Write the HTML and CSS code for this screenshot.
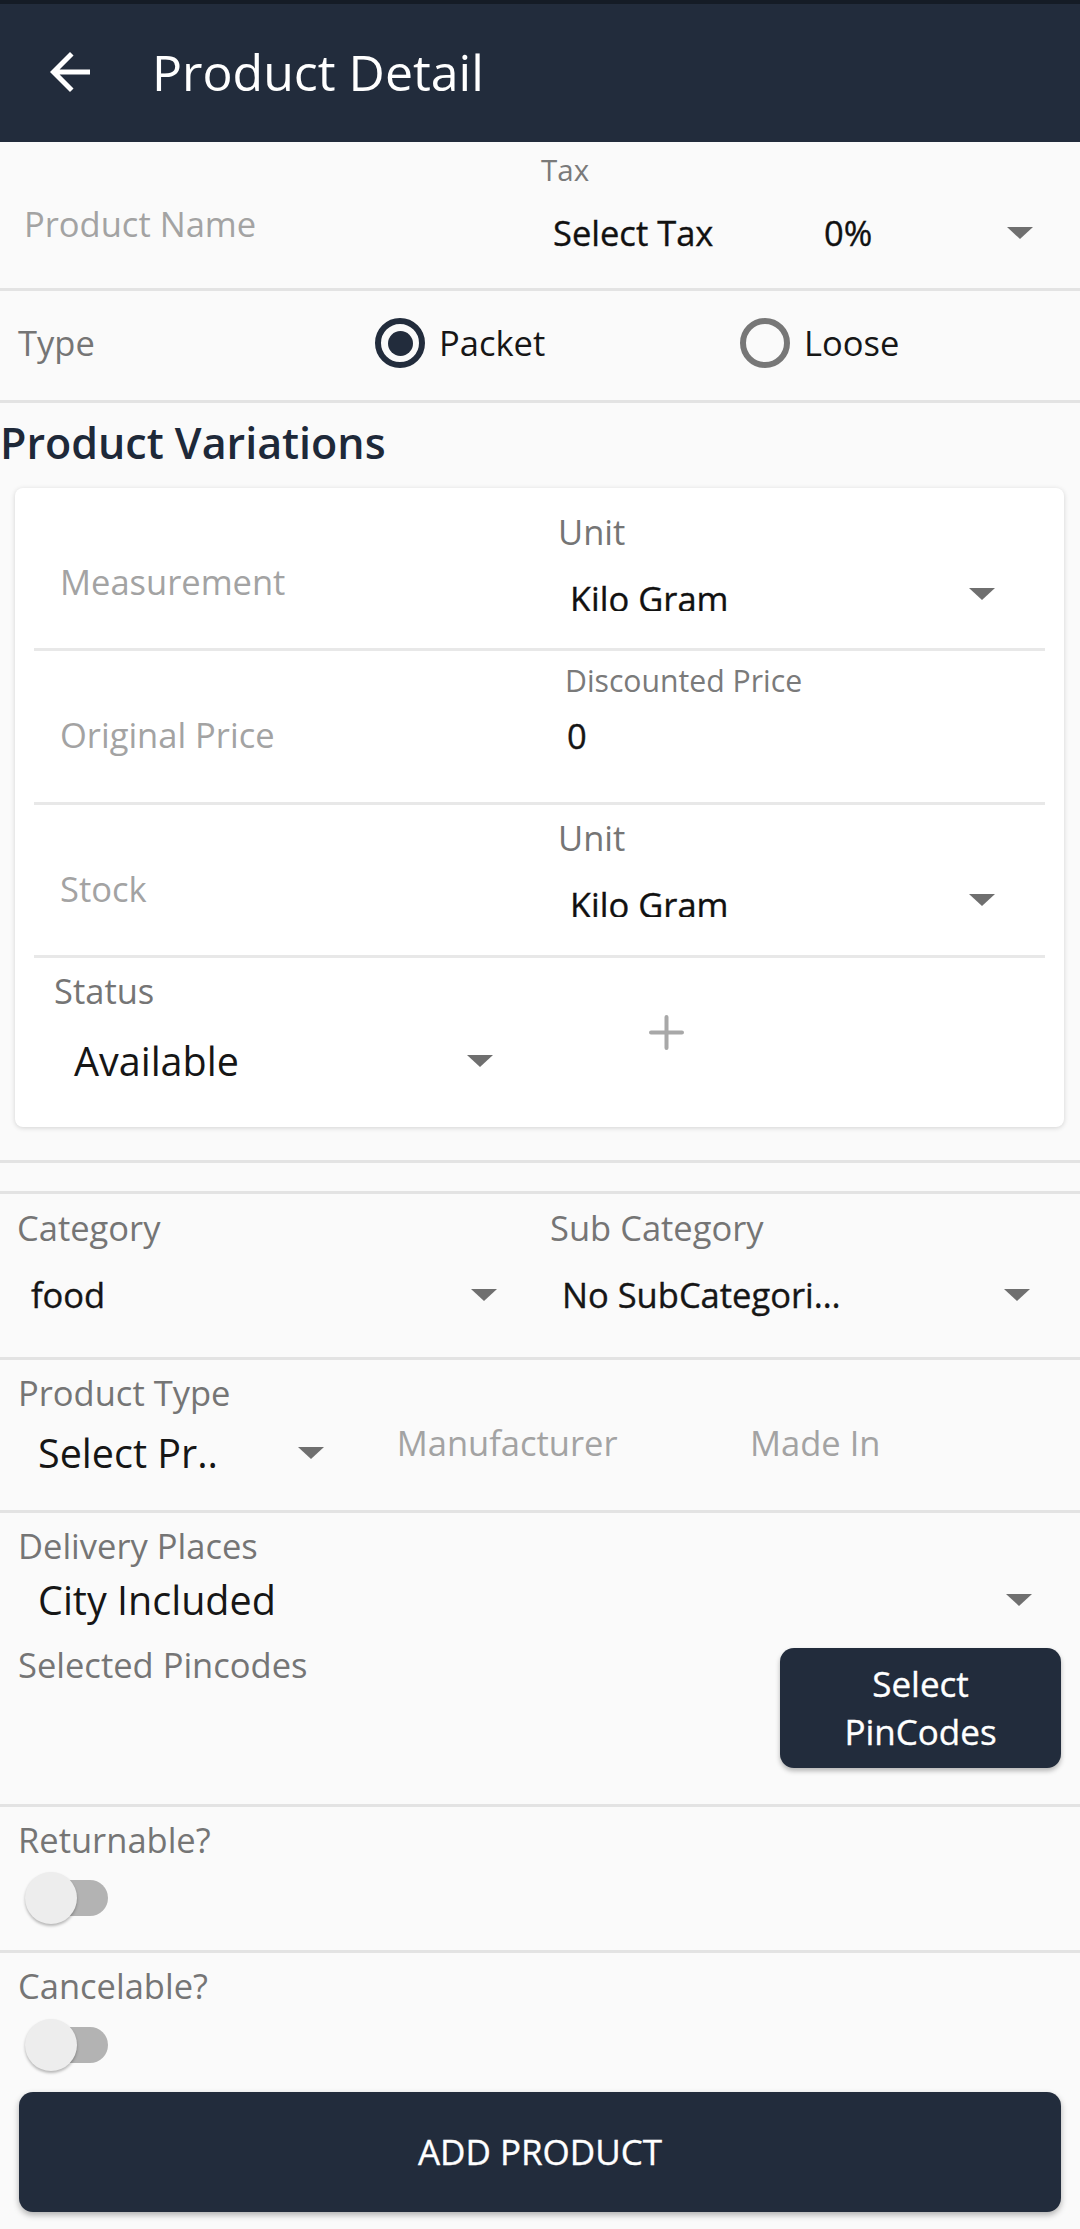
FILE: index.html
```html
<!DOCTYPE html>
<html>
<head>
<meta charset="utf-8">
<link rel="stylesheet" href="styles.css">
</head>
<body>
<header class="appbar">
  <svg class="back" viewBox="0 0 24 24"><path fill="#fff" d="M20 11H7.83l5.59-5.59L12 4l-8 8 8 8 1.41-1.41L7.83 13H20v-2z"/></svg>
  <div class="title">Product Detail</div>
</header>

<section class="sec-name">
  <div class="pname ph">Product Name</div>
  <div class="taxcol">
    <div class="small-label">Tax</div>
    <div class="taxrow">
      <span class="taxname strong">Select Tax</span>
      <span class="taxval strong">0%</span>
      <svg class="caret" viewBox="0 0 26 12"><polygon points="0,0 26,0 13,12"/></svg>
    </div>
  </div>
</section>

<section class="sec-type">
  <div class="typelabel">Type</div>
  <div class="radio">
    <span class="rcircle on"><span class="rdot"></span></span>
    <span class="rtext">Packet</span>
  </div>
  <div class="radio">
    <span class="rcircle off"></span>
    <span class="rtext">Loose</span>
  </div>
</section>

<h2 class="pv-title">Product Variations</h2>

<div class="card">
  <div class="vrow r1">
    <div class="vleft ph">Measurement</div>
    <div class="vright">
      <div class="label">Unit</div>
      <div class="kgrow">
        <span class="kg strong">Kilo Gram</span>
        <svg class="caret" viewBox="0 0 26 12"><polygon points="0,0 26,0 13,12"/></svg>
      </div>
    </div>
  </div>
  <div class="vrow r2">
    <div class="vleft ph">Original Price</div>
    <div class="vright price">
      <div class="small-label dp">Discounted Price</div>
      <div class="value strong zero">0</div>
    </div>
  </div>
  <div class="vrow r3">
    <div class="vleft ph">Stock</div>
    <div class="vright">
      <div class="label">Unit</div>
      <div class="kgrow">
        <span class="kg strong">Kilo Gram</span>
        <svg class="caret" viewBox="0 0 26 12"><polygon points="0,0 26,0 13,12"/></svg>
      </div>
    </div>
  </div>
  <div class="vrow last">
    <div class="statuscol">
      <div class="label">Status</div>
      <div class="bigspin status-spin">
        <span class="bigval">Available</span>
        <svg class="caret" viewBox="0 0 26 12"><polygon points="0,0 26,0 13,12"/></svg>
      </div>
    </div>
    <div class="pluscol">
      <svg class="plus" viewBox="0 0 35 35"><path d="M17.5 2v31M2 17.5h31" stroke="#a8a8a8" stroke-width="4" stroke-linecap="round" fill="none"/></svg>
    </div>
  </div>
</div>

<div class="emptylist"></div>

<section class="sec-cat">
  <div class="catcol left">
    <div class="label">Category</div>
    <div class="spin">
      <span class="value strong">food</span>
      <svg class="caret" viewBox="0 0 26 12"><polygon points="0,0 26,0 13,12"/></svg>
    </div>
  </div>
  <div class="catcol right">
    <div class="label">Sub Category</div>
    <div class="spin">
      <span class="value strong">No SubCategori…</span>
      <svg class="caret" viewBox="0 0 26 12"><polygon points="0,0 26,0 13,12"/></svg>
    </div>
  </div>
</section>

<section class="sec-ptype">
  <div class="ptcol">
    <div class="label">Product Type</div>
    <div class="bigspin pt-spin">
      <span class="bigval">Select Pr..</span>
      <svg class="caret" viewBox="0 0 26 12"><polygon points="0,0 26,0 13,12"/></svg>
    </div>
  </div>
  <div class="mfcol ph">Manufacturer</div>
  <div class="micol ph">Made In</div>
</section>

<section class="sec-deliv">
  <div class="label">Delivery Places</div>
  <div class="bigspin dl-spin">
    <span class="bigval">City Included</span>
    <svg class="caret" viewBox="0 0 26 12"><polygon points="0,0 26,0 13,12"/></svg>
  </div>
  <div class="pinrow">
    <div class="label pinlabel">Selected Pincodes</div>
    <div class="pinbtn">Select<br>PinCodes</div>
  </div>
</section>

<section class="sec-toggle bordered">
  <div class="label">Returnable?</div>
  <div class="switch"><span class="track"></span><span class="thumb"></span></div>
</section>

<section class="sec-toggle cancel">
  <div class="label">Cancelable?</div>
  <div class="switch"><span class="track"></span><span class="thumb"></span></div>
</section>

<div class="addbtn">ADD PRODUCT</div>
</body>
</html>
```

FILE: styles.css
```css
* { box-sizing: border-box; }
html, body { margin: 0; padding: 0; }
body {
  width: 1080px;
  height: 2229px;
  overflow: hidden;
  background: #fafafa;
  font-family: "Open Sans", "Noto Sans", sans-serif;
  font-size: 34.5px;
  line-height: 40px;
  color: #161616;
}

/* App bar */
.appbar {
  height: 142px;
  border-top: 4px solid #151c26;
  background: #222c3c;
  display: flex;
  align-items: center;
  padding-left: 40px;
}
.back { width: 60px; height: 60px; margin-top: -2px; flex: none; }
.title {
  font-size: 50px;
  line-height: 60px;
  color: #fff;
  margin-left: 52px;
  margin-top: -3px;
}

.label { color: #757575; line-height: 40px; }
.ph { color: #a3a3a3; }
.strong { color: #111; -webkit-text-stroke: 0.35px #111; }
.small-label { font-size: 29.5px; line-height: 34px; color: #7a7a7a; }
.value { color: #161616; }
.caret { width: 26px; height: 12px; fill: #6f6f6f; flex: none; }

/* Product name / tax */
.sec-name {
  display: flex;
  height: 149px;
  border-bottom: 3px solid #e3e3e3;
}
.pname { width: 540px; flex: none; padding-left: 24px; padding-top: 61.5px; }
.taxcol { flex: 1; padding-top: 11px; padding-left: 1px; }
.taxrow {
  display: flex;
  align-items: center;
  height: 44px;
  margin-top: 23.5px;
  padding-left: 12px;
  padding-right: 47px;
}
.taxname { width: 271px; flex: none; }
.taxval { flex: 1; }

/* Type radios */
.sec-type {
  display: flex;
  align-items: center;
  height: 112px;
  padding-bottom: 5px;
  border-bottom: 3px solid #e3e3e3;
}
.typelabel { width: 375px; flex: none; padding-left: 18px; color: #757575; }
.radio { display: flex; align-items: center; width: 365px; flex: none; }
.radio:last-child { flex: 1; width: auto; }
.rcircle {
  width: 50px; height: 50px;
  border-radius: 50%;
  display: flex; align-items: center; justify-content: center;
  flex: none;
}
.rcircle.on { border: 6px solid #222c3c; }
.rcircle.off { border: 6px solid #777; }
.rdot { width: 25px; height: 25px; border-radius: 50%; background: #222c3c; }
.rtext { margin-left: 14px; }

/* Variations */
.pv-title {
  margin: 11.5px 0 0 0;
  font-size: 43px;
  line-height: 56px;
  font-weight: 600;
  color: #1e2939;
}
.card {
  margin: 17.5px 16px 0 15px;
  background: #fff;
  border-radius: 8px;
  box-shadow: 0 1px 5px rgba(0,0,0,0.16);
  padding-bottom: 42.3px;
}
.vrow {
  margin: 0 19px;
  display: flex;
  border-bottom: 3px solid #e8e8e8;
}
.vrow.r1 { height: 163px; }
.vrow.r2 { height: 154px; }
.vrow.r3 { height: 153px; }
.vrow.last { border-bottom: none; }
.vleft { width: 524px; flex: none; padding-left: 26px; }
.r1 .vleft { padding-top: 74px; }
.r2 .vleft { padding-top: 64px; }
.r3 .vleft { padding-top: 63.5px; }
.vright { flex: 1; }
.r1 .vright { padding-top: 23.5px; }
.r3 .vright { padding-top: 12.5px; }
.vright.price { padding-top: 13px; padding-left: 7px; }
.small-label.dp { font-size: 30.2px; }
.zero { margin-top: 18px; padding-left: 2px; }
.kgrow {
  display: flex;
  align-items: center;
  justify-content: space-between;
  margin-top: 25px;
  height: 34px;
  padding-left: 12px;
  padding-right: 50px;
}
.kg {
  display: block;
  height: 100%;
  overflow: hidden;
  line-height: 44px;
}

.statuscol { width: 490px; flex: none; padding-left: 20px; padding-top: 13px; }
.bigspin {
  display: flex;
  align-items: center;
  justify-content: space-between;
  height: 48px;
}
.bigval { font-size: 39.5px; line-height: 48px; color: #161616; }
.status-spin { margin-top: 25.7px; padding-left: 20px; padding-right: 31px; }
.pluscol { flex: 1; padding-top: 57px; padding-left: 125px; }
.plus { width: 35px; height: 35px; display: block; }

.emptylist {
  margin-top: 33px;
  height: 34px;
  border-top: 3px solid #e3e3e3;
  border-bottom: 3px solid #e3e3e3;
}

/* Category */
.sec-cat {
  display: flex;
  height: 166px;
  border-bottom: 3px solid #e3e3e3;
}
.catcol { width: 540px; flex: none; padding-top: 14px; }
.catcol.left { padding-left: 17px; }
.catcol.right { padding-left: 10px; }
.spin {
  display: flex;
  align-items: center;
  justify-content: space-between;
  height: 44px;
  margin-top: 25px;
}
.catcol.left .spin { padding-left: 14px; padding-right: 43px; }
.catcol.right .spin { padding-left: 12px; padding-right: 50px; }

/* Product type */
.sec-ptype {
  display: flex;
  height: 153px;
  border-bottom: 3px solid #e3e3e3;
}
.ptcol { width: 372px; flex: none; padding-left: 18px; padding-top: 13px; }
.pt-spin { margin-top: 15.7px; padding-left: 20px; padding-right: 48px; }
.mfcol { width: 360px; flex: none; padding-left: 24.7px; padding-top: 63px; }
.micol { flex: 1; padding-left: 18px; padding-top: 63px; }

/* Delivery */
.sec-deliv {
  height: 294px;
  padding-left: 18px;
  padding-top: 13px;
  border-bottom: 3px solid #e3e3e3;
}
.dl-spin { margin-top: 9.7px; padding-left: 20px; padding-right: 48px; }
.pinrow { display: flex; justify-content: space-between; align-items: flex-start; }
.pinlabel { margin-top: 21px; }
.pinbtn {
  margin-top: 24.3px;
  margin-right: 19px;
  width: 281px;
  height: 120px;
  padding-top: 12px;
  border-radius: 14px;
  background: #222c3c;
  color: #fff;
  text-align: center;
  font-size: 35px;
  line-height: 48px;
  -webkit-text-stroke: 0.35px #fff;
  box-shadow: 0 3px 5px rgba(0,0,0,0.28);
}

/* Toggles */
.sec-toggle { padding-left: 18px; padding-top: 13px; }
.sec-toggle.bordered { height: 146px; border-bottom: 3px solid #e3e3e3; }
.sec-toggle.cancel { padding-top: 13.5px; }
.switch { position: relative; width: 84px; height: 52px; margin-left: 7px; margin-top: 12px; }
.cancel .switch { margin-top: 12.5px; }
.track {
  position: absolute;
  left: 5px; top: 8px;
  width: 78px; height: 36px;
  border-radius: 18px;
  background: #b3b3b3;
}
.thumb {
  position: absolute;
  left: 0; top: 0;
  width: 52px; height: 52px;
  border-radius: 50%;
  background: #ededed;
  box-shadow: 0 2px 3px rgba(0,0,0,0.28);
}

.addbtn {
  margin: 21px 19px 0 19px;
  height: 120px;
  border-radius: 14px;
  background: #222c3c;
  color: #fff;
  font-size: 35px;
  -webkit-text-stroke: 0.35px #fff;
  display: flex;
  align-items: center;
  justify-content: center;
  box-shadow: 0 3px 6px rgba(0,0,0,0.3);
}
```
